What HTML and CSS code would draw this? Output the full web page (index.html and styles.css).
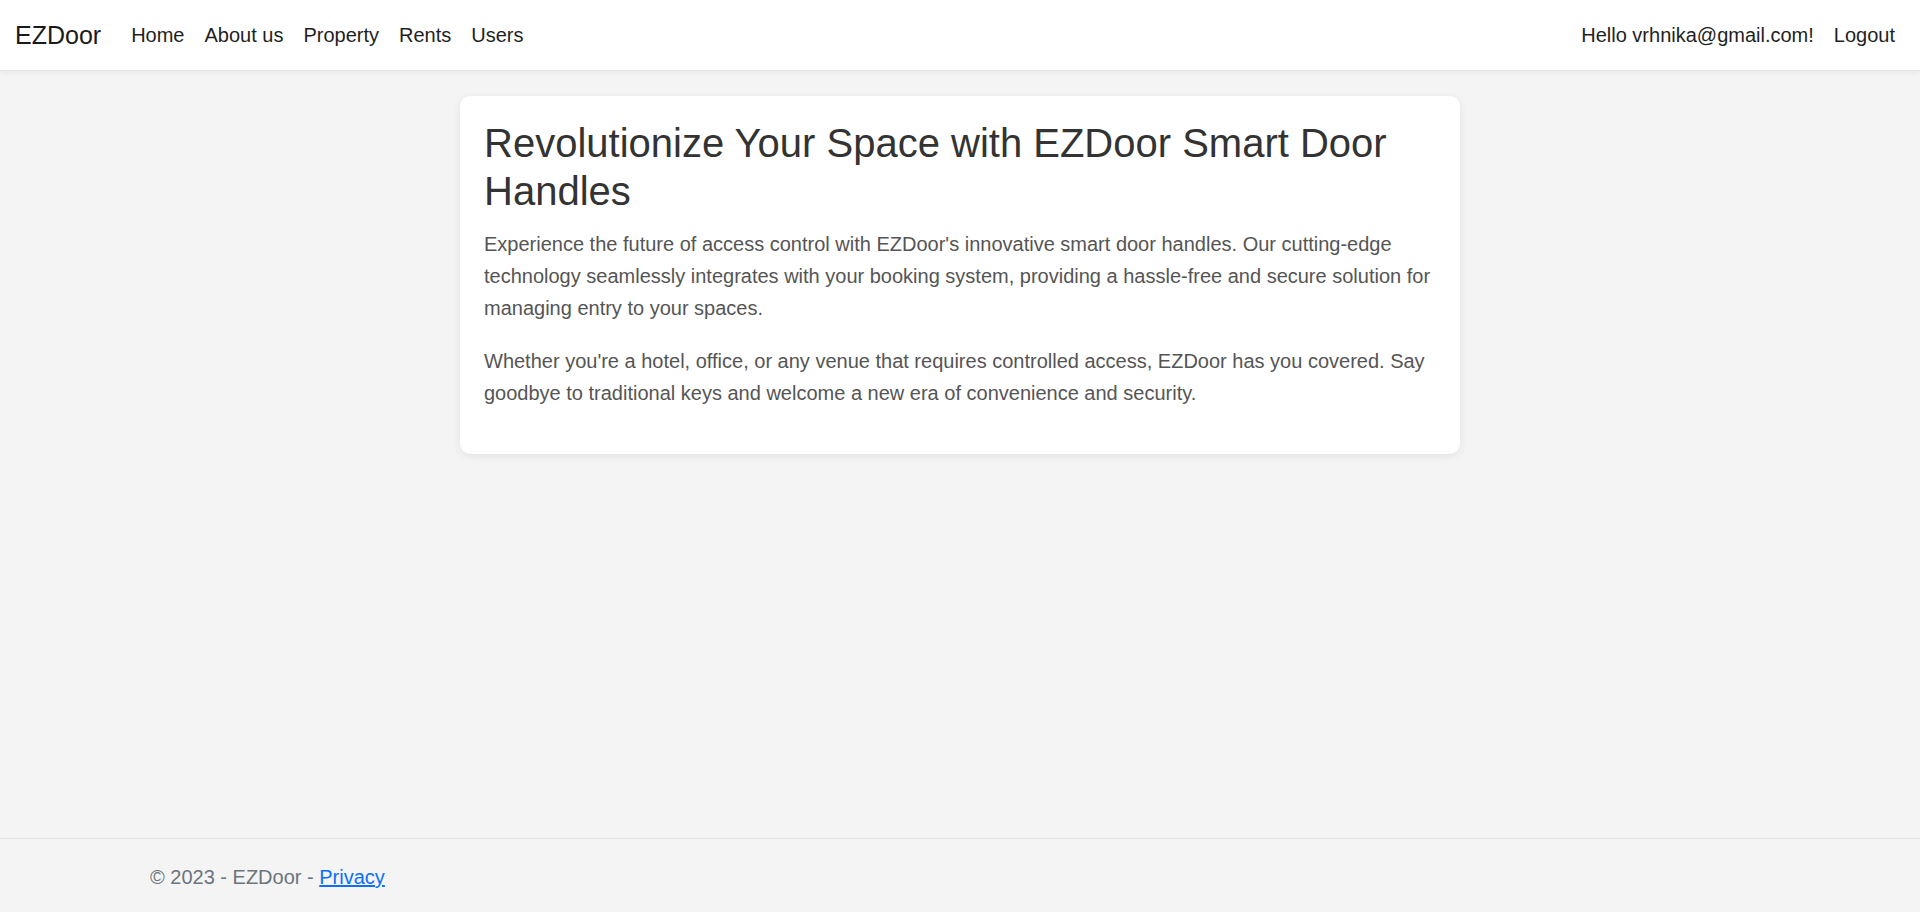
FILE: index.html
```html
<!DOCTYPE html>
<html lang="en">
<head>
<meta charset="utf-8">
<title>EZDoor</title>
<link rel="stylesheet" href="styles.css">
</head>
<body>
<header class="navbar">
  <div class="nav-left">
    <a class="brand" href="#">EZDoor</a>
    <nav class="nav-links">
      <a href="#">Home</a>
      <a href="#">About us</a>
      <a href="#">Property</a>
      <a href="#">Rents</a>
      <a href="#">Users</a>
    </nav>
  </div>
  <div class="nav-right">
    <span class="nav-text">Hello vrhnika@gmail.com!</span>
    <a href="#">Logout</a>
  </div>
</header>
<main class="main">
  <section class="card">
    <h1 class="title">Revolutionize Your Space with EZDoor Smart Door Handles</h1>
    <p class="text">Experience the future of access control with EZDoor's innovative smart door handles. Our cutting-edge technology seamlessly integrates with your booking system, providing a hassle-free and secure solution for managing entry to your spaces.</p>
    <p class="text">Whether you're a hotel, office, or any venue that requires controlled access, EZDoor has you covered. Say goodbye to traditional keys and welcome a new era of convenience and security.</p>
  </section>
</main>
<footer class="footer">
  <div class="footer-inner">© 2023 - EZDoor - <a href="#">Privacy</a></div>
</footer>
</body>
</html>
```

FILE: styles.css
```css
html, body {
  margin: 0;
  padding: 0;
  height: 100%;
}
body {
  font-family: "Liberation Sans", Arial, sans-serif;
  font-size: 20px;
  background: #f4f4f4;
  color: #212529;
  display: flex;
  flex-direction: column;
}
a {
  text-decoration: none;
  color: inherit;
}
.navbar {
  height: 70px;
  background: #fff;
  border-bottom: 1px solid #e3e3e8;
  box-shadow: 0 2px 6px rgba(0, 0, 0, 0.05);
  display: flex;
  align-items: center;
  justify-content: space-between;
  padding: 0 15px 0 15px;
  flex-shrink: 0;
}
.nav-left, .nav-right {
  display: flex;
  align-items: center;
}
.brand {
  font-size: 25px;
  color: #1a1a1a;
  margin-right: 20px;
}
.nav-links {
  display: flex;
}
.nav-links a, .nav-right a, .nav-text {
  padding: 0 10px;
  color: #1f1f1f;
}
.main {
  flex: 1;
  display: flex;
  justify-content: center;
  align-items: flex-start;
  padding-top: 25px;
}
.card {
  width: 1000px;
  box-sizing: border-box;
  background: #fff;
  border-radius: 10px;
  box-shadow: 0 2px 8px rgba(0, 0, 0, 0.08);
  padding: 23px 24px 22px;
}
.title {
  font-size: 40px;
  font-weight: 400;
  line-height: 48px;
  color: #333;
  margin: 0 0 14px;
}
.text {
  font-size: 20px;
  line-height: 31.8px;
  color: #555;
  margin: 0 0 22px;
}
.footer {
  border-top: 1px solid #e3e3e8;
  height: 73px;
  flex-shrink: 0;
  color: #6c757d;
  white-space: nowrap;
}
.footer-inner {
  padding: 3px 0 0 150px;
  line-height: 70px;
}
.footer a {
  color: #0d6efd;
  text-decoration: underline;
}
```
